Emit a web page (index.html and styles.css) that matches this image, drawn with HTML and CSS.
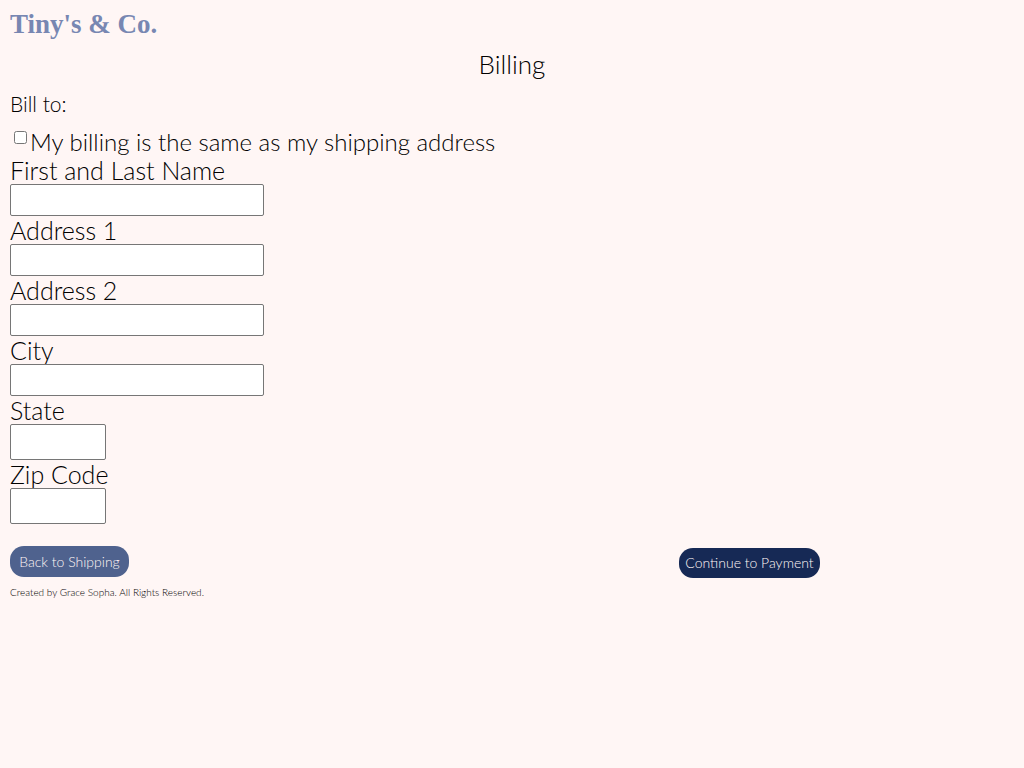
FILE: index.html
```html
<!DOCTYPE html>
<html lang="en">
<head>
<meta charset="utf-8">
<meta name="viewport" content="width=device-width, initial-scale=1">
<title>Tiny's &amp; Co. - Billing</title>
<link rel="stylesheet" href="styles.css">
</head>
<body>
<header class="brand">Tiny's &amp; Co.</header>
<main>
<h1 class="title">Billing</h1>
<form class="billing">
<h2 class="subtitle">Bill to:</h2>
<div class="same">
<input class="same-box" type="checkbox" id="same">
<label for="same">My billing is the same as my shipping address</label>
</div>
<label class="label" for="name">First and Last Name</label>
<input class="field" type="text" id="name">
<label class="label" for="address1">Address 1</label>
<input class="field" type="text" id="address1">
<label class="label" for="address2">Address 2</label>
<input class="field" type="text" id="address2">
<label class="label" for="city">City</label>
<input class="field" type="text" id="city">
<label class="label" for="state">State</label>
<input class="field field-short" type="text" id="state">
<label class="label" for="zip">Zip Code</label>
<input class="field field-short" type="text" id="zip">
<div class="actions">
<button class="button back" type="button">Back to Shipping</button>
<button class="button next" type="button">Continue to Payment</button>
</div>
</form>
</main>
<footer class="footer">Created by Grace Sopha. All Rights Reserved.</footer>
</body>
</html>
```
FILE: styles.css
```css
* {
  box-sizing: border-box;
}

body {
  margin: 0;
  padding: 8px 10px;
  background: #fff6f5;
  color: #000;
  font-family: Lato, "Open Sans", sans-serif;
  font-weight: 300;
}

.brand {
  color: #7887b2;
  font: bold 27px/32px "Liberation Serif", serif;
}

.title {
  margin: 8px 0 0;
  font-size: 26px;
  line-height: 32px;
  font-weight: 300;
  text-align: center;
}

.billing {
  display: flex;
  flex-direction: column;
  align-items: flex-start;
}

.subtitle {
  margin: 12px 0;
  font-size: 21px;
  line-height: 24px;
  font-weight: 300;
}

.same {
  display: flex;
  align-items: flex-start;
  font-size: 24px;
  line-height: 28px;
}

.same-box {
  flex: none;
  width: 13px;
  height: 13px;
  margin: 3px 3px 3px 4px;
}

.label {
  font-size: 25px;
  line-height: 28px;
}

.field {
  width: 254px;
  max-width: 100%;
  height: 32px;
  padding: 1px 2px;
  border: 1px solid #767676;
  border-radius: 2px;
  background: #fff;
  font: inherit;
  font-size: 24px;
}

.field-short {
  width: 96px;
  height: 36px;
}

.actions {
  display: grid;
  grid-template-columns: repeat(3, 1fr);
  align-items: start;
  justify-items: start;
  align-self: stretch;
  margin-top: 22px;
}

.button {
  padding: 6px;
  border: 0;
  border-radius: 14px;
  color: #fff6f5;
  font: 300 14px/18px Lato, "Open Sans", sans-serif;
  white-space: nowrap;
}

.back {
  min-width: 119px;
  min-height: 31px;
  background: #4f628e;
}

.next {
  grid-column: 3;
  min-width: 140px;
  margin-top: 2px;
  background: #162955;
}

.footer {
  margin-top: 8px;
  font-size: 10px;
  line-height: 12px;
}
```
